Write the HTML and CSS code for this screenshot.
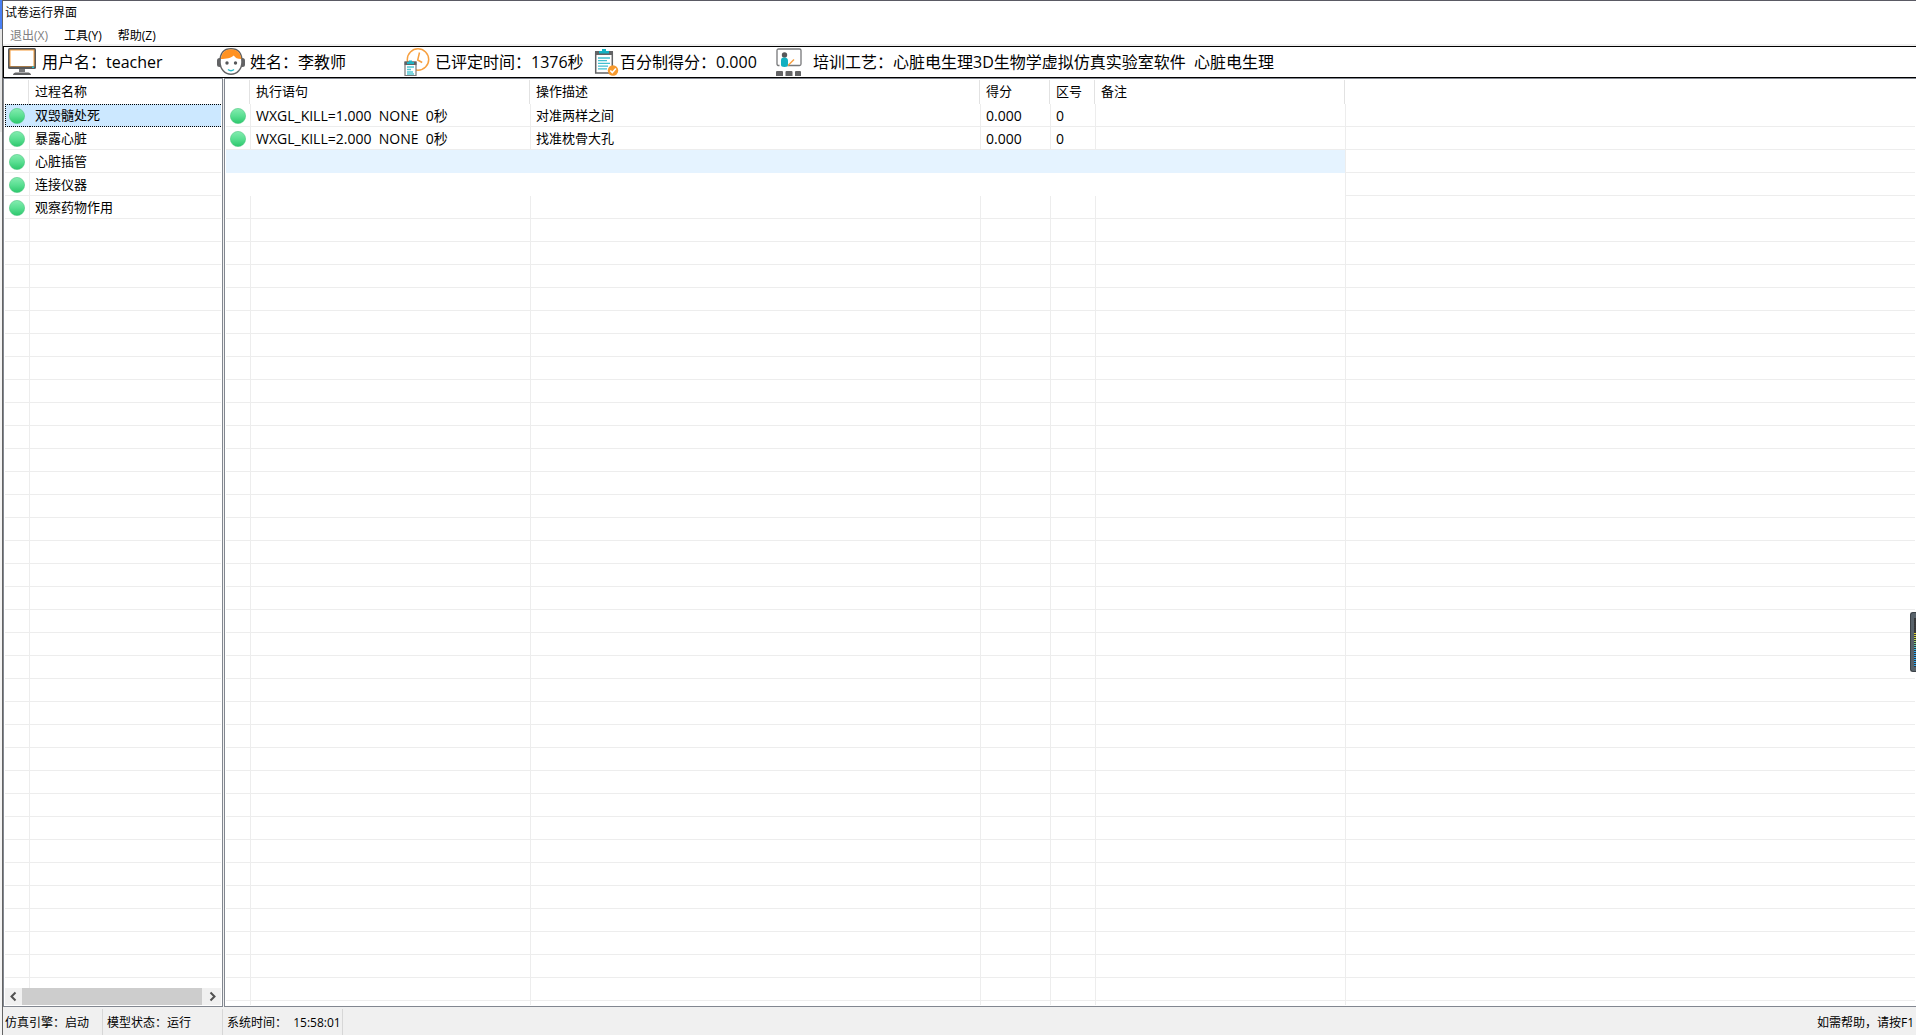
FILE: index.html
```html
<!DOCTYPE html>
<html lang="zh-CN">
<head>
<meta charset="utf-8">
<meta name="viewport" content="width=device-width, initial-scale=1">
<title>试卷运行界面</title>
<link rel="stylesheet" href="styles.css">
</head>
<body>
<svg class="defs" aria-hidden="true">
  <defs>
    <linearGradient id="ball" x1="0" y1="0" x2="0" y2="1">
      <stop offset="0" stop-color="#84ecb0"/>
      <stop offset="0.5" stop-color="#5adf92"/>
      <stop offset="1" stop-color="#2cc76c"/>
    </linearGradient>
    <symbol id="dot" viewBox="0 0 16 16"><circle cx="8" cy="8" r="7.6" fill="url(#ball)" stroke="#4cc880" stroke-width=".6"/></symbol>
  </defs>
</svg>
<div class="backdrop">
<div class="window">
  <h1 class="title">试卷运行界面</h1>
  <nav class="menu">
    <button class="menu-item" disabled>退出(X)</button>
    <button class="menu-item">工具(Y)</button>
    <button class="menu-item">帮助(Z)</button>
  </nav>

  <header class="info">
    <div class="field user">
      <svg class="icon" viewBox="0 0 28 28" aria-hidden="true">
        <rect x="0" y="0" width="28" height="21" rx="1.5" fill="#57585a"/>
        <rect x="1.5" y="1.5" width="25" height="17" fill="#f49b38"/>
        <rect x="2.5" y="2.5" width="23" height="15.5" fill="#fff"/>
        <rect x="24" y="18.5" width="2" height="1.5" fill="#20c0d0"/>
        <path d="M11 21h6v3h-6z" fill="#77787a"/>
        <path d="M5 27c0-2 2-2.500 4-2.500h10c2 0 4 .5 4 2.500z" fill="#626365"/>
      </svg>
      <span>用户名：teacher</span>
    </div>
    <div class="field name">
      <svg class="icon" viewBox="0 0 28 28" aria-hidden="true">
        <rect x="0" y="10" width="5" height="9" rx="2.500" fill="#626365"/>
        <rect x="23" y="10" width="5" height="9" rx="2.500" fill="#626365"/>
        <path d="M3 14C3 5 7 .8 14 .8S25 5 25 14c0 7-5 12.200-11 12.200S3 21 3 14z" fill="#fff" stroke="#626365" stroke-width="1.500"/>
        <path d="M3.800 11C5 4 8.500 1.200 14 1.200S23.500 4 24.300 11c-4 0-6-1-7.500-3.500C14.500 10 9 11 3.800 11z" fill="#ff9222"/>
        <circle cx="10" cy="15" r="1.700" fill="#55575a"/><circle cx="18.500" cy="15" r="1.700" fill="#55575a"/>
        <path d="M11 21.500q3 2.500 6 0" fill="none" stroke="#2cbcc9" stroke-width="1.500"/>
      </svg>
      <span>姓名：李教师</span>
    </div>
    <div class="field time">
      <svg class="icon" viewBox="0 0 28 28" aria-hidden="true">
        <circle cx="14" cy="11.500" r="10.700" fill="#fff" stroke="#f7a040" stroke-width="1.500"/>
        <path d="M15.500 4.500l-1.800 7.500 4.500 2.500" fill="none" stroke="#f7a040" stroke-width="1.500"/>
        <path d="M1 14h11v13.500H1z" fill="#fff" stroke="#77787a" stroke-width="1.200"/>
        <path d="M.5 13.500h12V17H.5z" fill="#626365"/>
        <path d="M3 14h7v2H3zM5 12.500h3v2H5z" fill="#20b4c4"/>
        <path d="M3 19h7M3 21.500h4M3 24h6M3 26h7" stroke="#53c7d3" stroke-width="1.300"/>
      </svg>
      <span>已评定时间：1376秒</span>
    </div>
    <div class="field score">
      <svg class="icon" viewBox="0 0 28 28" aria-hidden="true">
        <path d="M3.700 5h16.600v20H3.700z" fill="#fff" stroke="#626365" stroke-width="1.500"/>
        <path d="M3 3h18v4H3z" fill="#626365"/>
        <path d="M7 3h3V1h4v2h3v2.500H7z" fill="#14b3c4"/>
        <path d="M6 10h12M6 12.700h9M6 15.400h12M6 18.100h10M6 20.800h9" stroke="#42c0cf" stroke-width="1.300"/>
        <circle cx="21" cy="22.500" r="5.200" fill="#f79a2e"/>
        <path d="M18.300 22.500l2 2 3.600-4" fill="none" stroke="#fff" stroke-width="1.600"/>
      </svg>
      <span>百分制得分：0.000</span>
    </div>
    <div class="field course">
      <svg class="icon" viewBox="0 0 28 28" aria-hidden="true">
        <path d="M4.500 17.500H4q-2 0-2-1.500V2.500Q2 1 3.500 1h21Q26 1 26 2.500V16q0 1.500-1.500 1.500h-12" fill="#fff" stroke="#77787a" stroke-width="1.300"/>
        <circle cx="9.500" cy="7" r="2.700" fill="#57585a"/>
        <path d="M6 13c0-3 1-3.500 3.500-3.500S13 11 13 13v4c0 1-1 2-3.500 2S6 18 6 17z" fill="#12b0c1"/>
        <path d="M13 17.500l6-6" stroke="#f7a040" stroke-width="1.400"/>
        <path d="M1 24q0-1 1-1h5q1 0 1 1v4H1zM10.500 24q0-1 1-1h5q1 0 1 1v4h-7zM20 24q0-1 1-1h4q1 0 1 1v4h-6z" fill="#626365"/>
      </svg>
      <span>培训工艺：心脏电生理3D生物学虚拟仿真实验室软件&nbsp; 心脏电生理</span>
    </div>
  </header>

  <main class="panes">
    <section class="list process">
      <div class="list-body">
        <table class="grid">
          <colgroup><col class="c-icon"><col></colgroup>
          <thead><tr><th></th><th>过程名称</th></tr></thead>
          <tbody>
            <tr class="selected"><td><svg class="dot"><use href="#dot"/></svg></td><td>双毁髓处死</td></tr>
            <tr><td><svg class="dot"><use href="#dot"/></svg></td><td>暴露心脏</td></tr>
            <tr><td><svg class="dot"><use href="#dot"/></svg></td><td>心脏插管</td></tr>
            <tr><td><svg class="dot"><use href="#dot"/></svg></td><td>连接仪器</td></tr>
            <tr><td><svg class="dot"><use href="#dot"/></svg></td><td>观察药物作用</td></tr>
          </tbody>
        </table>
      </div>
      <div class="scrollbar">
        <button class="arrow" aria-label="向左滚动"><svg viewBox="0 0 17 15"><path d="M10.500 3.500l-4 4 4 4"/></svg></button>
        <div class="thumb"></div>
        <button class="arrow" aria-label="向右滚动"><svg viewBox="0 0 17 15"><path d="M6.500 3.500l4 4-4 4"/></svg></button>
      </div>
    </section>

    <section class="list steps">
      <div class="list-body">
        <table class="grid">
          <colgroup><col class="c-icon"><col class="c-stmt"><col class="c-desc"><col class="c-score"><col class="c-zone"><col class="c-note"></colgroup>
          <thead><tr><th></th><th>执行语句</th><th>操作描述</th><th>得分</th><th>区号</th><th>备注</th></tr></thead>
          <tbody>
            <tr><td><svg class="dot"><use href="#dot"/></svg></td><td class="code">WXGL_KILL=1.000&nbsp; NONE&nbsp; 0秒</td><td>对准两样之间</td><td class="code">0.000</td><td class="code">0</td><td></td></tr>
            <tr><td><svg class="dot"><use href="#dot"/></svg></td><td class="code">WXGL_KILL=2.000&nbsp; NONE&nbsp; 0秒</td><td>找准枕骨大孔</td><td class="code">0.000</td><td class="code">0</td><td></td></tr>
            <tr class="hover"><td colspan="6"></td></tr>
            <tr class="blank"><td colspan="6"></td></tr>
          </tbody>
        </table>
      </div>
    </section>
  </main>

  <footer class="status">
    <span class="cell engine">仿真引擎：启动</span>
    <span class="cell model">模型状态：运行</span>
    <span class="cell clock">系统时间：&nbsp; 15:58:01</span>
    <span class="help">如需帮助，请按F1</span>
  </footer>
</div>
</div>
<div class="meter" aria-hidden="true"><div class="bars"></div></div>
</body>
</html>
```
FILE: styles.css
```css
* { box-sizing: border-box; }

body {
  margin: 0;
  color: #000;
  font-family: "Open Sans", "Noto Sans CJK SC", sans-serif;
  font-size: 12px;
}

button {
  border: 0;
  padding: 0;
  background: none;
  color: inherit;
  font: inherit;
}

.defs { position: absolute; width: 0; height: 0; }

/* sliver of the desktop that shows left of the window */
.backdrop {
  height: 100vh;
  padding-left: 2px;
  background: linear-gradient(#4a80f5 29px, #e6e6e6 29px, #e6e6e6 132px, #f4f4f4 132px);
}

.window {
  display: flex;
  flex-direction: column;
  height: 100%;
  border-top: 1px solid #5a5a64;
  border-left: 1px solid #646464;
  background: #fff;
  overflow: hidden;
}

.title {
  margin: 0;
  padding-left: 2px;
  font-size: 12px;
  font-weight: 400;
  line-height: 24px;
}

.menu {
  display: flex;
  gap: 16px;
  height: 21px;
  padding-left: 7px;
  border-bottom: 2px solid #f0f0f0;
}
.menu-item { line-height: 22px; height: 21px; }
.menu-item:disabled { color: #808080; }

.info {
  display: flex;
  flex: none;
  height: 32px;
  border: 1px solid #000;
  border-right: 0;
  font-size: 16px;
  line-height: 30px;
  white-space: nowrap;
}
.field { display: flex; flex: none; align-items: center; gap: 6px; padding-left: 4px; }
.icon { width: 28px; height: 28px; flex: none; }
.user { width: 209px; }
.name { width: 187px; gap: 5px; }
.time { width: 188px; gap: 3px; }
.score { width: 183px; gap: 0; }
.course { gap: 10px; }

.panes {
  display: flex;
  flex: 1;
  min-height: 0;
  background: #f0f0f0;
}
.list {
  display: flex;
  flex-direction: column;
  border: 1px solid #828790;
  padding: 1px;
  background: #fff;
}
.process { width: 220px; margin-right: 1px; }
.steps { flex: 1; min-width: 0; border-right: 0; }

.list-body {
  --line: linear-gradient(#ededed, #ededed);
  flex: 1;
  min-height: 0;
  overflow: hidden;
  background-repeat: no-repeat;
}
.process .list-body {
  background-image: var(--line), repeating-linear-gradient(transparent 0 22px, #ededed 22px 23px);
  background-size: 1px 100%, 100% 100%;
  background-position: 24px 24px, 0 24px;
}
.steps .list-body {
  background-image: var(--line), var(--line), var(--line), var(--line), var(--line), var(--line),
    repeating-linear-gradient(transparent 0 22px, #ededed 22px 23px);
  background-size: 1px 100%, 1px 100%, 1px 100%, 1px 100%, 1px 100%, 1px 100%, 100% 100%;
  background-position: 24px 24px, 304px 24px, 754px 24px, 824px 24px, 869px 24px, 1119px 24px, 0 24px;
}

.grid {
  table-layout: fixed;
  border-collapse: separate;
  border-spacing: 0;
  font-size: 13px;
}
.process .grid { width: 100%; }
.steps .grid { width: 1119px; }
.c-icon { width: 25px; }
.c-stmt { width: 280px; }
.c-desc { width: 450px; }
.c-score { width: 70px; }
.c-zone { width: 45px; }
.c-note { width: 249px; }

.grid th {
  height: 24px;
  padding: 0 0 2px 5px;
  background: linear-gradient(#e2e2e2, #e2e2e2) no-repeat right 1px top / 1px 100%;
  font-weight: 400;
  line-height: 22px;
  text-align: left;
}
.steps th:last-child { background-position: right top; }
.process th:last-child { background: none; }
.grid td {
  height: 23px;
  padding: 0 0 0 5px;
  line-height: 23px;
  white-space: nowrap;
}
.grid td:first-child { padding-left: 4px; }
.grid .code { font-size: 14px; }
.dot { display: block; width: 16px; height: 16px; }

.selected td {
  border-top: 1px dotted #000;
  border-bottom: 1px dotted #000;
  background: #cce8ff;
  line-height: 21px;
}
.selected td:first-child { border-left: 1px dotted #000; padding-left: 3px; }
.hover td { background: #e5f3ff; }
.blank td { background: #fff; }

.scrollbar { display: flex; height: 17px; background: #f0f0f0; }
.arrow { width: 17px; }
.arrow svg { display: block; width: 17px; height: 15px; }
.arrow path { fill: none; stroke: #505050; stroke-width: 2; }
.thumb { flex: 1; margin-right: 2px; background: #cdcdcd; }

.status {
  display: flex;
  flex: none;
  height: 28px;
  padding-top: 2px;
  background: #f0f0f0;
  line-height: 27px;
  white-space: nowrap;
}
.cell { border-right: 1px solid #d7d7d7; }
.engine { width: 100px; padding-left: 2px; }
.model { width: 120px; padding-left: 4px; }
.clock { width: 120px; padding-left: 4px; }
.help { margin-left: auto; padding-right: 2px; }

/* docked level meter peeking in from the screen edge */
.meter {
  position: absolute;
  top: 612px;
  right: 0;
  width: 6px;
  height: 60px;
  padding: 5px 0 4px 3px;
  border: 1px solid #3c4248;
  border-right: 0;
  border-radius: 3px 0 0 3px;
  background: #59636b;
}
.bars {
  height: 100%;
  background:
    repeating-linear-gradient(#33363a 0 1px, transparent 1px 2px),
    linear-gradient(#3a3a3a 14px, #e6d22a 14px, #b8d850 22px, #4cc8c0 28px, #2ea8f0 34px);
}
```
